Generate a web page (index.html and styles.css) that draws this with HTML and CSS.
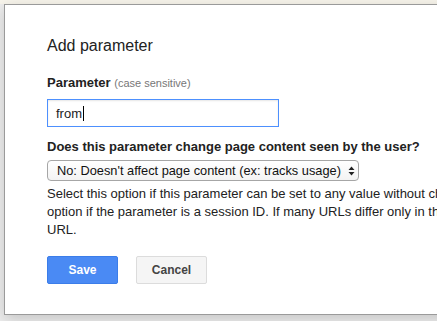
FILE: index.html
```html
<!DOCTYPE html>
<html>
<head>
<meta charset="utf-8">
<link rel="stylesheet" href="styles.css">
</head>
<body>
<div class="page">
  <div class="dialog">
    <div class="title">Add parameter</div>
    <div class="label">Parameter <span class="hint">(case sensitive)</span></div>
    <div class="input"><span>from</span><span class="caret"></span></div>
    <div class="question">Does this parameter change page content seen by the user?</div>
    <div class="select">
      <span>No: Doesn't affect page content (ex: tracks usage)</span>
      <svg class="arrows" width="7" height="10" viewBox="0 0 7 10"><path d="M3.5 0.5 L6.5 4 L0.5 4 Z M3.5 9.5 L6.5 6 L0.5 6 Z" fill="#222"/></svg>
    </div>
    <p class="desc">Select this option if this parameter can be set to any value without changing the page content. For example, select this<br>option if the parameter is a session ID. If many URLs differ only in this parameter, Googlebot will crawl one representative<br>URL.</p>
    <div class="buttons">
      <button class="btn save">Save</button>
      <button class="btn cancel">Cancel</button>
    </div>
  </div>
</div>
</body>
</html>
```

FILE: styles.css
```css
html, body {
  margin: 0;
  padding: 0;
  width: 437px;
  height: 321px;
  overflow: hidden;
}
body {
  background: #eeeeee;
  font-family: "Liberation Sans", Arial, sans-serif;
  color: #222;
}
.page {
  padding: 4px 0 0 4px;
  background: linear-gradient(#f8f5ec 0, #f8f5ec 4px, #eeeeee 4px);
  height: 321px;
  box-sizing: border-box;
}
.dialog {
  width: 900px;
  background: #fff;
  border: 1px solid #9a9a9a;
  box-shadow: 0 4px 14px rgba(0,0,0,0.18);
  padding: 31px 0 30px 42px;
  box-sizing: border-box;
}
.title {
  font-size: 16px;
  line-height: 20px;
  color: #222;
}
.label {
  margin-top: 19px;
  font-size: 13px;
  line-height: 16px;
  font-weight: bold;
}
.hint {
  font-weight: normal;
  font-size: 11px;
  color: #777;
}
.input {
  margin-top: 8px;
  width: 232px;
  height: 28px;
  box-sizing: border-box;
  border: 1px solid #4d90fe;
  box-shadow: inset 0 1px 2px rgba(0,0,0,0.1);
  padding: 0 8px;
  display: flex;
  align-items: center;
  font-size: 13px;
  color: #222;
}
.caret {
  display: inline-block;
  width: 1px;
  height: 15px;
  background: #000;
  margin-left: 1px;
}
.question {
  margin-top: 12px;
  font-size: 13px;
  line-height: 16px;
  font-weight: bold;
}
.select {
  margin-top: 5px;
  width: 312px;
  height: 21px;
  box-sizing: border-box;
  border: 1px solid #a6a6a6;
  border-radius: 4px;
  background: linear-gradient(#ffffff, #f3f3f3);
  display: flex;
  align-items: center;
  justify-content: space-between;
  padding: 0 3px 0 9px;
  font-size: 12.8px;
  color: #111;
}
.arrows {
  display: block;
}
.desc {
  margin: 4px 0 0 0;
  font-size: 13px;
  line-height: 18px;
  white-space: nowrap;
  color: #222;
}
.buttons {
  margin-top: 17px;
  display: flex;
  gap: 18px;
}
.btn {
  width: 71px;
  height: 28px;
  box-sizing: border-box;
  border-radius: 2px;
  font-family: "Liberation Sans", Arial, sans-serif;
  font-size: 12px;
  font-weight: bold;
  padding: 0;
}
.save {
  background: #4a8af4;
  border: 1px solid #3b7de9;
  color: #fff;
}
.cancel {
  background: #f5f5f5;
  border: 1px solid #dcdcdc;
  color: #444;
}
```
